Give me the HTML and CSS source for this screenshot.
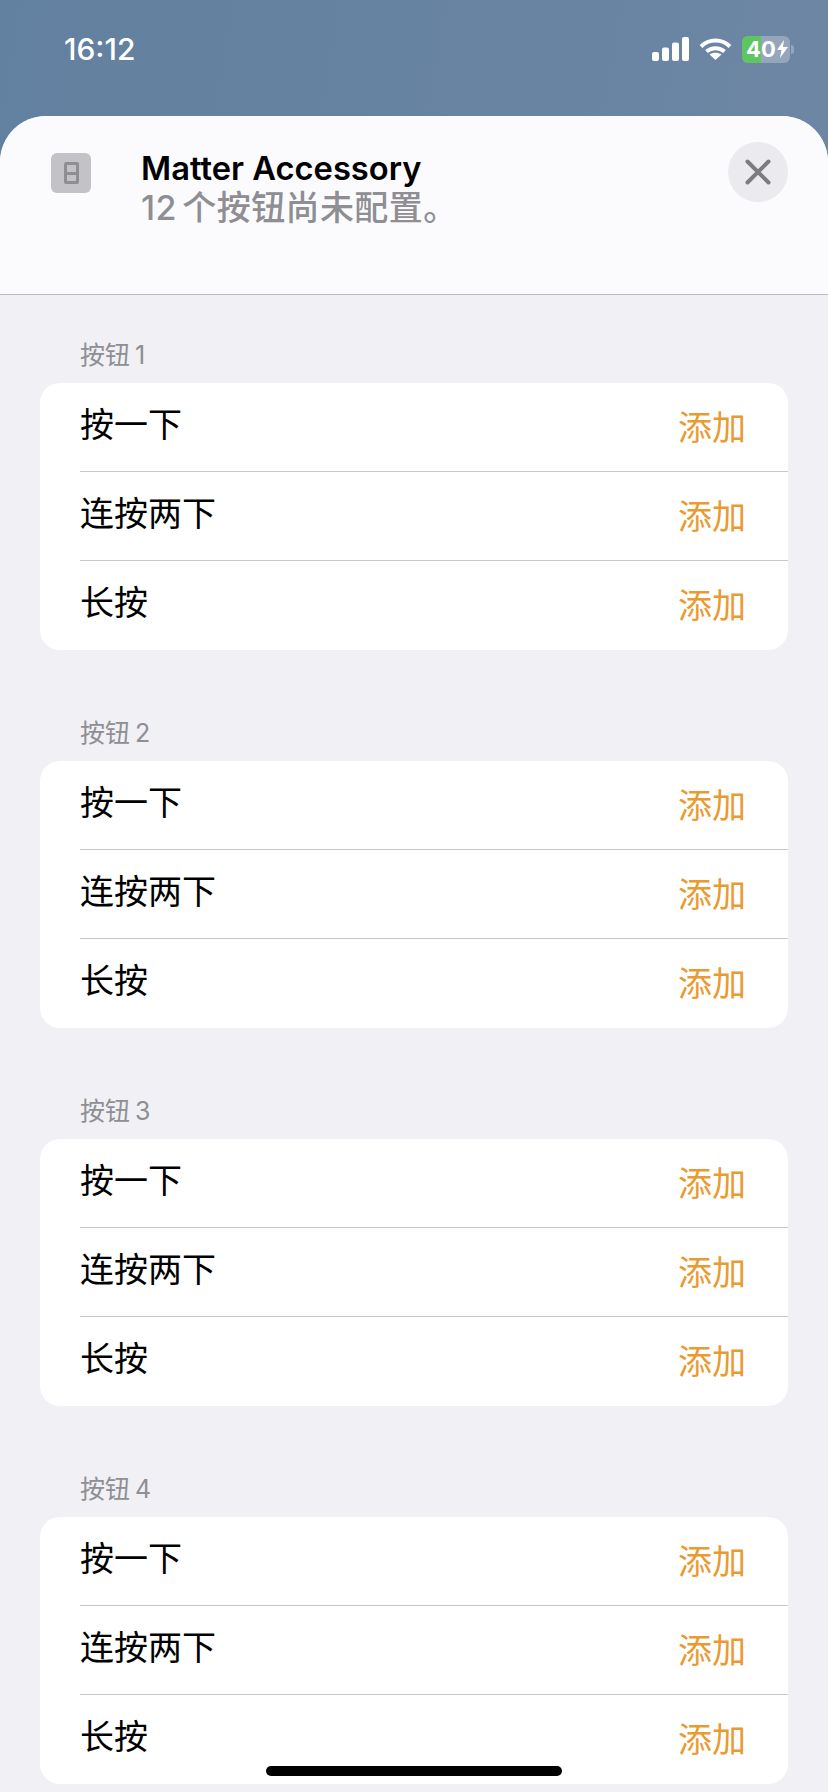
FILE: index.html
```html
<!DOCTYPE html>
<html lang="zh-CN">
<head>
    <meta charset="UTF-8">
    <meta name="viewport" content="width=device-width, initial-scale=1.0">
    <title>Matter Accessory</title>
    <link rel="stylesheet" href="styles.css">
</head>
<body>
    <div class="status-bar">
        <span class="time">16:12</span>
        <div class="status-icons">
            <svg class="signal" width="37" height="24" viewBox="0 0 37 24">
                <rect x="0" y="15" width="7" height="9" rx="2"/>
                <rect x="10" y="10.500" width="7" height="13.500" rx="2"/>
                <rect x="20" y="5.500" width="7" height="18.500" rx="2"/>
                <rect x="30" y="0" width="7" height="24" rx="2"/>
            </svg>
            <svg class="wifi" width="33" height="24" viewBox="0 0 33 24" fill="none" stroke="#fff" stroke-width="4">
                <path d="M2 9.500C10 1.500 23 1.500 31 9.500"/>
                <path d="M7.500 14.500C12.500 10 20.500 10 25.500 14.500"/>
                <path d="M16.500 23L10.500 17.500C14 15 19 15 22.500 17.500Z" fill="#fff" stroke="none"/>
            </svg>
            <div class="battery">
                <div class="battery-fill"></div>
                <span class="battery-text">40</span>
                <svg class="bolt" width="11" height="18" viewBox="0 0 11 18"><path d="M7 0L0 10H4.500L3 18L11 7H6Z" fill="#fff"/></svg>
            </div>
            <div class="battery-cap"></div>
        </div>
    </div>

    <div class="sheet">
        <header class="sheet-header">
            <div class="device-icon"><div class="device-switch"></div></div>
            <div class="header-text">
                <div class="title">Matter Accessory</div>
                <div class="subtitle">12 个按钮尚未配置。</div>
            </div>
            <div class="close-button">
                <svg width="26" height="26" viewBox="0 0 26 26" stroke="#7b7b80" stroke-width="4" stroke-linecap="round"><path d="M2.500 2.500L23.500 23.500M23.500 2.500L2.500 23.500"/></svg>
            </div>
        </header>

        <main class="sections">
            <section class="section">
                <h2 class="section-label">按钮 1</h2>
                <div class="card">
                    <div class="row"><span class="row-name">按一下</span><span class="row-add">添加</span></div>
                    <div class="row"><span class="row-name">连按两下</span><span class="row-add">添加</span></div>
                    <div class="row"><span class="row-name">长按</span><span class="row-add">添加</span></div>
                </div>
            </section>
            <section class="section">
                <h2 class="section-label">按钮 2</h2>
                <div class="card">
                    <div class="row"><span class="row-name">按一下</span><span class="row-add">添加</span></div>
                    <div class="row"><span class="row-name">连按两下</span><span class="row-add">添加</span></div>
                    <div class="row"><span class="row-name">长按</span><span class="row-add">添加</span></div>
                </div>
            </section>
            <section class="section">
                <h2 class="section-label">按钮 3</h2>
                <div class="card">
                    <div class="row"><span class="row-name">按一下</span><span class="row-add">添加</span></div>
                    <div class="row"><span class="row-name">连按两下</span><span class="row-add">添加</span></div>
                    <div class="row"><span class="row-name">长按</span><span class="row-add">添加</span></div>
                </div>
            </section>
            <section class="section">
                <h2 class="section-label">按钮 4</h2>
                <div class="card">
                    <div class="row"><span class="row-name">按一下</span><span class="row-add">添加</span></div>
                    <div class="row"><span class="row-name">连按两下</span><span class="row-add">添加</span></div>
                    <div class="row"><span class="row-name">长按</span><span class="row-add">添加</span></div>
                </div>
            </section>
        </main>
    </div>

    <div class="home-indicator"></div>
</body>
</html>
```
FILE: styles.css
```css
html, body {
    height: 1792px;
    overflow: hidden;
}
body {
    margin: 0;
    position: relative;
    font-family: Inter, "Noto Sans CJK SC", sans-serif;
    background: linear-gradient(100deg, #62809f, #7088a6);
}
.status-bar {
    height: 116px;
    box-sizing: border-box;
    padding: 30px 34px 0 64px;
    display: flex;
    justify-content: space-between;
    align-items: flex-start;
    color: #fff;
}
.time {
    font-size: 30px;
    font-weight: 500;
    line-height: 38px;
}
.status-icons {
    display: flex;
    align-items: center;
    height: 34px;
    padding-top: 2px;
}
.signal {
    fill: #fff;
    margin-right: 10px;
}
.wifi {
    margin-right: 10px;
}
.battery {
    width: 48px;
    height: 27px;
    border-radius: 6px;
    background: #95a6bc;
    position: relative;
    overflow: hidden;
    display: flex;
    align-items: center;
    padding-left: 4px;
    box-sizing: border-box;
}
.battery-fill {
    position: absolute;
    left: 0;
    top: 0;
    bottom: 0;
    width: 19px;
    background: #5dc65f;
}
.battery-text {
    position: relative;
    font-size: 22px;
    font-weight: 700;
    line-height: 27px;
}
.bolt {
    position: relative;
    margin-left: 1px;
}
.battery-cap {
    width: 3px;
    height: 9px;
    margin-left: 1px;
    background: #95a6bc;
    border-radius: 0 3px 3px 0;
}
.sheet {
    height: 1676px;
    background: #f0f0f5;
    border-radius: 46px 46px 0 0;
    overflow: hidden;
}
.sheet-header {
    height: 179px;
    box-sizing: border-box;
    background: #fbfbfe;
    border-bottom: 1px solid #b9b9bf;
    display: flex;
    align-items: flex-start;
    padding: 26px 40px 0 51px;
}
.device-icon {
    width: 40px;
    height: 40px;
    margin-top: 11px;
    border-radius: 6px;
    background: #c2c2c7;
    display: flex;
    align-items: center;
    justify-content: center;
}
.device-switch {
    width: 9px;
    height: 16px;
    border: 3px solid #8e8e93;
    border-radius: 2px;
    background: linear-gradient(#8e8e93, #8e8e93) center / 100% 3px no-repeat;
}
.header-text {
    flex: 1;
    margin-left: 50px;
    padding-top: 6px;
}
.title {
    font-size: 32.700px;
    font-weight: 600;
    line-height: 40px;
    color: #000;
}
.subtitle {
    font-size: 34px;
    font-weight: 500;
    line-height: 40px;
    word-spacing: -4px;
    letter-spacing: 0.400px;
    color: #8e8e93;
}
.close-button {
    width: 60px;
    height: 60px;
    border-radius: 50%;
    background: #ebebef;
    display: flex;
    align-items: center;
    justify-content: center;
}
.sections {
    padding: 0 40px;
}
.section {
    padding-top: 44px;
    margin-bottom: 23px;
}
.section-label {
    margin: 0 0 12px 40px;
    font-size: 25px;
    font-weight: 400;
    line-height: 32px;
    word-spacing: -2px;
    color: #8e8e93;
}
.card {
    background: #fff;
    border-radius: 20px;
    overflow: hidden;
}
.row {
    height: 89px;
    box-sizing: border-box;
    margin-left: 40px;
    padding-right: 42px;
    display: flex;
    justify-content: space-between;
    align-items: center;
    border-bottom: 1px solid #c8c8cc;
}
.row:last-child {
    border-bottom: none;
}
.row-name {
    font-size: 34px;
    color: #000;
    position: relative;
    top: -5px;
}
.row-add {
    font-size: 34px;
    color: #e99a30;
    position: relative;
    top: -2px;
}
.home-indicator {
    position: absolute;
    left: 266px;
    top: 1766px;
    width: 296px;
    height: 10px;
    border-radius: 5px;
    background: #000;
}
```
